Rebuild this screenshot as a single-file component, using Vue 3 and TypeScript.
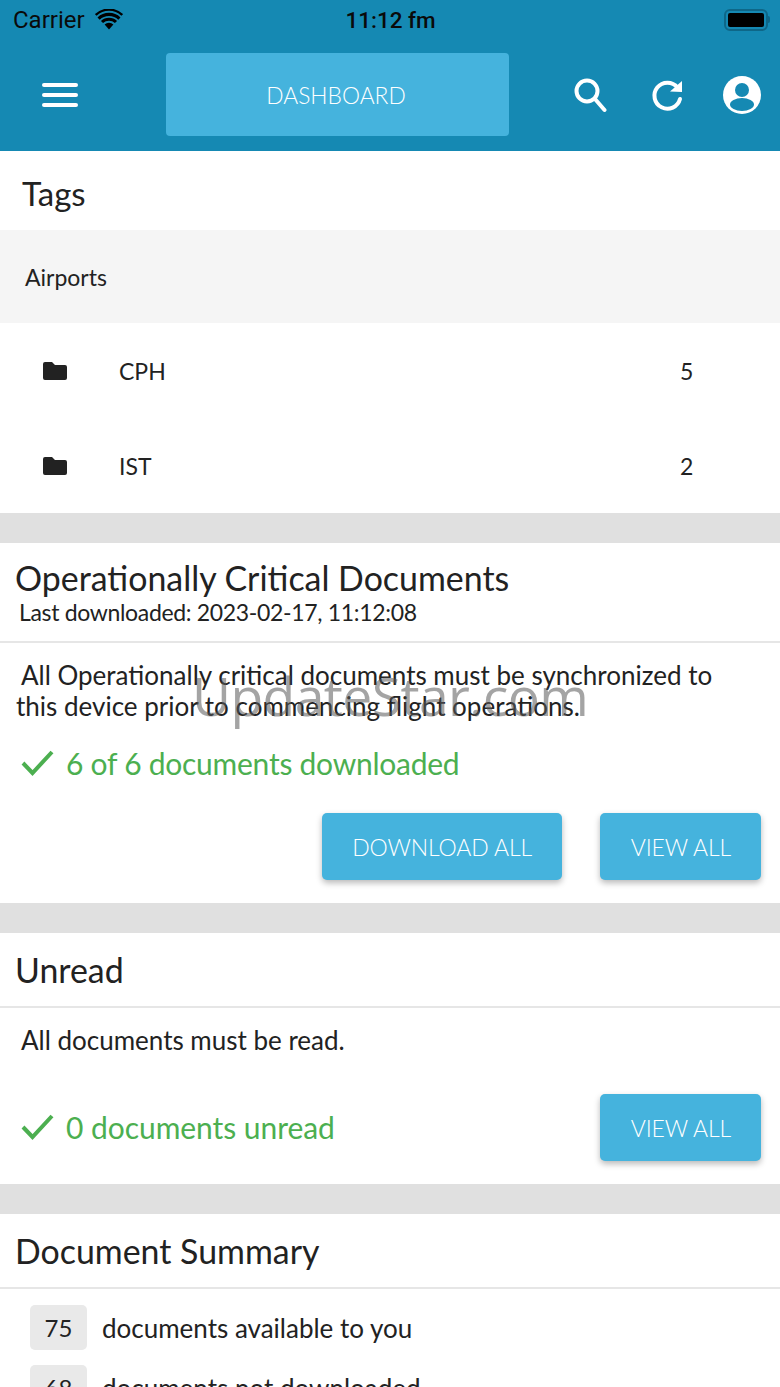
<script setup lang="ts">
const rows: { name: string; count: number }[] = [
  { name: 'CPH', count: 5 },
  { name: 'IST', count: 2 },
]
const folder = 'M3 2h7l3 3h10a2 2 0 0 1 2 2v11a2 2 0 0 1-2 2H3a2 2 0 0 1-2-2V4a2 2 0 0 1 2-2z'
</script>

<template>
  <div class="page">
    <header class="header">
      <div class="status">
        <div class="status-left">
          <span class="carrier">Carrier</span>
          <svg class="wifi" viewBox="0 0 28 22" width="28" height="22">
            <path d="M14 20.5 9.6 15.6a6.4 6.4 0 0 1 8.8 0z" fill="#000" />
            <path d="M3.6 9.6a15 15 0 0 1 20.8 0" fill="none" stroke="#000" stroke-width="3.2" />
            <path d="M7 13a10 10 0 0 1 14 0" fill="none" stroke="#000" stroke-width="3" />
            <path d="M.8 6a19 19 0 0 1 26.4 0" fill="none" stroke="#000" stroke-width="2.4" />
          </svg>
        </div>
        <span class="time">11:12 fm</span>
        <div class="battery"><i></i></div>
      </div>
      <div class="toolbar">
        <button class="icon-btn menu" aria-label="Menu"><span></span><span></span><span></span></button>
        <div class="title">DASHBOARD</div>
        <div class="actions">
          <svg viewBox="0 0 34 36" width="34" height="36" fill="none" stroke="#fff" stroke-width="4" stroke-linecap="round">
            <circle cx="14" cy="14" r="10.5" />
            <path d="M22 22 31.5 33" />
          </svg>
          <svg viewBox="0 0 34 36" width="34" height="36" fill="none">
            <path d="M26.5 10.5A13 13 0 1 0 29 22" stroke="#fff" stroke-width="4" stroke-linecap="round" />
            <path d="M19 14.5 31 4v11z" fill="#fff" />
          </svg>
          <svg viewBox="0 0 38 38" width="38" height="38">
            <circle cx="19" cy="19" r="19" fill="#fff" />
            <circle cx="19" cy="14" r="7" fill="#1589b3" />
            <ellipse cx="19" cy="28.5" rx="12" ry="6.5" fill="#1589b3" />
          </svg>
        </div>
      </div>
    </header>

    <section class="tags">
      <h2 class="tags-title">Tags</h2>
      <div class="group">Airports</div>
      <div v-for="r in rows" :key="r.name" class="tag-row">
        <svg viewBox="0 0 26 22" width="26" height="22"><path :d="folder" fill="#222" /></svg>
        <span class="tag-name">{{ r.name }}</span>
        <span class="tag-count">{{ r.count }}</span>
      </div>
    </section>

    <section class="card">
      <div class="card-head critical">
        <h2>Operationally Critical Documents</h2>
        <p class="sub">Last downloaded: 2023-02-17, 11:12:08</p>
      </div>
      <div class="body critical-body">
        <p class="text wrap">All Operationally critical documents must be synchronized to this device prior to commencing flight operations.</p>
        <div class="ok first">
          <svg viewBox="0 0 36 28" width="36" height="28" fill="none" stroke="#4caf50" stroke-width="4">
            <path d="M3 14 12.5 24 32 3" />
          </svg>
          <span>6 of 6 documents downloaded</span>
        </div>
        <div class="buttons">
          <button class="btn">DOWNLOAD ALL</button>
          <button class="btn">VIEW ALL</button>
        </div>
      </div>
    </section>

    <section class="card">
      <div class="card-head"><h2>Unread</h2></div>
      <div class="body unread-body">
        <p class="text">All documents must be read.</p>
        <div class="status-row">
          <div class="ok lifted">
            <svg viewBox="0 0 36 28" width="36" height="28" fill="none" stroke="#4caf50" stroke-width="4">
              <path d="M3 14 12.5 24 32 3" />
            </svg>
            <span>0 documents unread</span>
          </div>
          <button class="btn">VIEW ALL</button>
        </div>
      </div>
    </section>

    <section class="card">
      <div class="card-head"><h2>Document Summary</h2></div>
      <div class="summary">
        <div class="sum-row"><span class="badge">75</span><span>documents available to you</span></div>
        <div class="sum-row"><span class="badge">68</span><span>documents not downloaded</span></div>
      </div>
    </section>

    <div class="watermark">UpdateStar.com</div>
  </div>
</template>

<style>
html, body { margin: 0; background: #fff; }
</style>

<style scoped>
.page {
  position: relative;
  width: 780px;
  height: 1387px;
  overflow: hidden;
  background: #fff;
  color: #222;
  font-family: Lato, "Liberation Sans", sans-serif;
}
h2, p { margin: 0; font-weight: 400; }

.header { height: 151px; background: #1589b3; }
.status {
  height: 40px;
  display: grid;
  grid-template-columns: 1fr auto 1fr;
  align-items: center;
  color: #0a0a0a;
  font: 400 22px Roboto, "Liberation Sans", sans-serif;
  padding: 0 12px 0 13px;
}
.status-left { display: flex; align-items: center; gap: 10px; }
.carrier { font-size: 24px; }
.wifi { margin-top: -1px; }
.time { font-weight: 500; font-size: 22.5px; }
.battery {
  position: relative;
  justify-self: end;
  width: 44px;
  height: 22px;
  box-sizing: border-box;
  border: 2px solid #0e6788;
  border-radius: 6px;
  padding: 2px;
}
.battery::after {
  content: "";
  position: absolute;
  right: -4px;
  top: 5px;
  width: 2px;
  height: 7px;
  border-radius: 0 2px 2px 0;
  background: #0e6788;
}
.battery i { display: block; height: 100%; background: #000; border-radius: 2px; }

.toolbar { height: 111px; display: flex; align-items: flex-start; padding-top: 13px; box-sizing: border-box; }
.icon-btn { border: 0; background: none; padding: 0; }
.menu {
  width: 36px;
  height: 24px;
  margin: 30px 0 0 42px;
  display: flex;
  flex-direction: column;
  justify-content: space-between;
}
.menu span { display: block; height: 4px; background: #fff; border-radius: 2px; }
.title {
  width: 343px;
  height: 83px;
  margin-left: 88px;
  padding-right: 3px;
  box-sizing: border-box;
  border-radius: 4px;
  background: #45b3dd;
  color: #fff;
  font-size: 22.8px;
  font-weight: 300;
  display: flex;
  align-items: center;
  justify-content: center;
}
.actions { display: flex; align-items: center; margin: 23px 0 0 64px; gap: 42px; }
.actions svg:nth-child(2) { margin-left: 2px; }
.actions svg:last-child { margin-left: -4px; }

.tags-title { height: 79px; line-height: 84px; padding-left: 22px; font-size: 33px; }
.group {
  height: 93px;
  line-height: 94px;
  padding-left: 25px;
  background: #f5f5f5;
  font-size: 23px;
}
.tag-row {
  height: 95px;
  display: flex;
  align-items: center;
  padding-left: 42px;
  font-size: 23px;
  box-sizing: border-box;
}
.tag-name { margin-left: 51px; flex: 1; }
.tag-count { width: 100px; }

.card { border-top: 30px solid #e0e0e0; }
.card-head {
  height: 75px;
  box-sizing: border-box;
  border-bottom: 2px solid #e6e6e6;
  padding-left: 15px;
  line-height: 74px;
}
.card-head h2 { font-size: 33.9px; }
.card-head.critical { height: 100px; line-height: normal; padding-top: 15px; }
.sub { font-size: 23px; padding-left: 4px; letter-spacing: -0.33px; }

.body { box-sizing: border-box; padding: 0 16px; }
.critical-body { height: 260px; padding-top: 17px; }
.unread-body { height: 176px; padding-top: 17px; }
.text { font-size: 26px; line-height: 31px; text-indent: 5px; }
.text.wrap { padding-right: 40px; }
.ok { display: flex; align-items: center; gap: 10px; color: #4caf50; font-size: 30px; padding-left: 4px; }
.ok.first { margin-top: 23px; letter-spacing: -0.25px; }
.ok.lifted { margin-top: -2px; letter-spacing: -0.05px; }
.buttons { display: flex; justify-content: flex-end; gap: 38px; margin-top: 32px; padding-right: 3px; }
.btn {
  height: 67px;
  padding: 0 30px 0 30.5px;
  border: 0;
  border-radius: 5px;
  background: #45b3dd;
  color: #fff;
  font: 300 23px Lato, "Liberation Sans", sans-serif;
  letter-spacing: -0.1px;
  box-shadow: 0 3px 6px rgba(0, 0, 0, 0.28);
}
.status-row { display: flex; justify-content: space-between; align-items: center; margin-top: 38px; padding-right: 3px; }

.summary { padding: 16px 0 0 30px; display: flex; flex-direction: column; gap: 15px; }
.sum-row { display: flex; align-items: center; gap: 15px; font-size: 26px; }
.badge {
  width: 57px;
  height: 45px;
  border-radius: 5px;
  background: #e9e9e9;
  display: flex;
  align-items: center;
  justify-content: center;
  font-size: 24px;
}

.watermark {
  position: absolute;
  left: 192px;
  top: 659px;
  font: 400 53.5px "Open Sans", sans-serif;
  letter-spacing: -0.6px;
  color: rgba(90, 90, 90, 0.55);
  white-space: nowrap;
  pointer-events: none;
}
</style>
